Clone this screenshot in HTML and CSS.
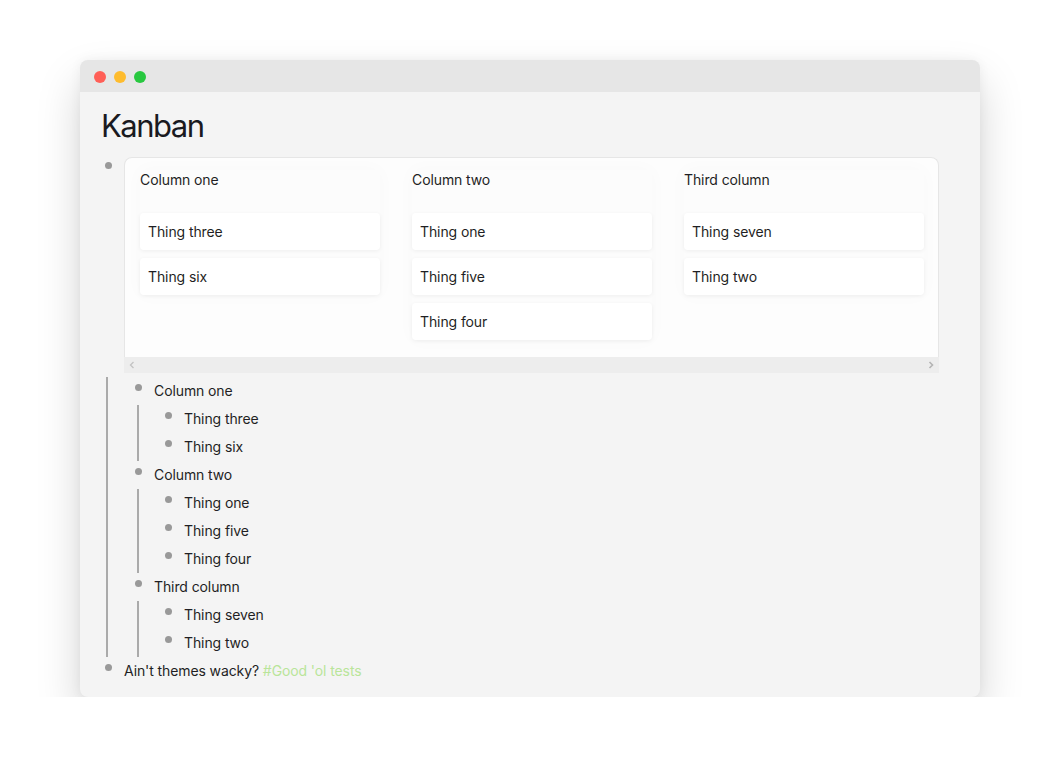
FILE: index.html
```html
<!DOCTYPE html>
<html>
<head>
<meta charset="utf-8">
<link rel="stylesheet" href="styles.css">
</head>
<body>
<div class="window">
  <div class="titlebar">
    <span class="light red"></span>
    <span class="light yellow"></span>
    <span class="light green"></span>
  </div>
  <div class="page">
    <h1 class="title">Kanban</h1>
    <div class="item board-item">
      <span class="bullet board-bullet"></span>
      <div class="board-wrap">
        <div class="board">
          <div class="column">
            <div class="col-head">Column one</div>
            <div class="card">Thing three</div>
            <div class="card">Thing six</div>
          </div>
          <div class="column">
            <div class="col-head">Column two</div>
            <div class="card">Thing one</div>
            <div class="card">Thing five</div>
            <div class="card">Thing four</div>
          </div>
          <div class="column">
            <div class="col-head">Third column</div>
            <div class="card">Thing seven</div>
            <div class="card">Thing two</div>
          </div>
        </div>
        <div class="scrollbar">
          <svg width="8" height="8" viewBox="0 0 8 8"><path d="M5.5 1 L2.5 4 L5.5 7" fill="none" stroke="#c4c4c4" stroke-width="1.4"/></svg>
          <svg width="8" height="8" viewBox="0 0 8 8"><path d="M2.5 1 L5.5 4 L2.5 7" fill="none" stroke="#b4b4b4" stroke-width="1.6"/></svg>
        </div>
      </div>
    </div>
    <div class="children">
      <div class="item"><span class="bullet"></span><span class="text">Column one</span></div>
      <div class="children">
        <div class="item"><span class="bullet"></span><span class="text">Thing three</span></div>
        <div class="item"><span class="bullet"></span><span class="text">Thing six</span></div>
      </div>
      <div class="item"><span class="bullet"></span><span class="text">Column two</span></div>
      <div class="children">
        <div class="item"><span class="bullet"></span><span class="text">Thing one</span></div>
        <div class="item"><span class="bullet"></span><span class="text">Thing five</span></div>
        <div class="item"><span class="bullet"></span><span class="text">Thing four</span></div>
      </div>
      <div class="item"><span class="bullet"></span><span class="text">Third column</span></div>
      <div class="children">
        <div class="item"><span class="bullet"></span><span class="text">Thing seven</span></div>
        <div class="item"><span class="bullet"></span><span class="text">Thing two</span></div>
      </div>
    </div>
    <div class="item"><span class="bullet"></span><span class="text">Ain't themes wacky? <span class="tag">#Good 'ol tests</span></span></div>
  </div>
</div>
</body>
</html>
```
FILE: styles.css
```css
html, body {
  margin: 0;
  padding: 0;
  background: #ffffff;
}
body {
  font-family: Inter, "Noto Sans", sans-serif;
  font-size: 14px;
  letter-spacing: -0.1px;
  color: #1f1f24;
}
.window {
  margin: 60px 0 0 80px;
  width: 900px;
  height: 637px;
  border-radius: 8px;
  background: #f4f4f4;
  box-shadow: 0 22px 44px rgba(0, 0, 0, 0.17), 0 0 12px rgba(0, 0, 0, 0.05);
  overflow: hidden;
}
.titlebar {
  height: 32px;
  background: #e6e6e6;
  display: flex;
  align-items: center;
  gap: 8px;
  padding-left: 14px;
  padding-top: 1px;
  box-sizing: border-box;
}
.light {
  width: 12px;
  height: 12px;
  border-radius: 50%;
  display: block;
}
.red { background: #ff5f57; }
.yellow { background: #febc2e; }
.green { background: #28c840; }
.page {
  padding: 13px 0 12px 12px;
}
.title {
  margin: 0 0 12px 9px;
  font-size: 31px;
  letter-spacing: -1.5px;
  line-height: 40px;
  font-weight: 400;
  color: #1a1a1f;
  position: relative;
  top: 1px;
}
.item {
  display: flex;
  align-items: flex-start;
  height: 28px;
  line-height: 28px;
}
.bullet {
  flex: 0 0 auto;
  width: 7px;
  height: 7px;
  border-radius: 50%;
  background: #999999;
  margin: 7px 12px 0 13px;
}
.board-item {
  height: auto;
  line-height: normal;
}
.board-bullet {
  margin-top: 5px;
}
.board-wrap {
  width: 815px;
}
.board {
  height: 200px;
  box-sizing: border-box;
  border: 1px solid #e6e6e6;
  border-bottom: none;
  border-radius: 8px 8px 0 0;
  background: #fdfdfd;
  display: flex;
  gap: 32px;
  padding: 12px 0 0 15px;
  overflow: hidden;
}
.column {
  width: 240px;
  flex: 0 0 240px;
  display: flex;
  flex-direction: column;
  gap: 8px;
  align-self: flex-start;
  box-shadow: 0 0 18px rgba(0, 0, 0, 0.025);
  background: #fcfcfc;
}
.col-head {
  height: 20px;
  line-height: 20px;
  margin-bottom: 15px;
}
.card {
  height: 37px;
  line-height: 37px;
  padding: 0 8px;
  background: #ffffff;
  border-radius: 4px;
  box-shadow: 0 1px 4px rgba(0, 0, 0, 0.06);
}
.scrollbar {
  height: 16px;
  background: #ededed;
  display: flex;
  align-items: center;
  justify-content: space-between;
  padding: 0 4px;
}
.scrollbar svg {
  display: block;
}
.children {
  margin-left: 14px;
  border-left: 2px solid #aaaaaa;
  padding-left: 14px;
}
.children .children {
  margin-left: 15px;
  padding-left: 13px;
}
.page > .children {
  margin-top: 4px;
}
.tag {
  color: #b9e59a;
}
```
